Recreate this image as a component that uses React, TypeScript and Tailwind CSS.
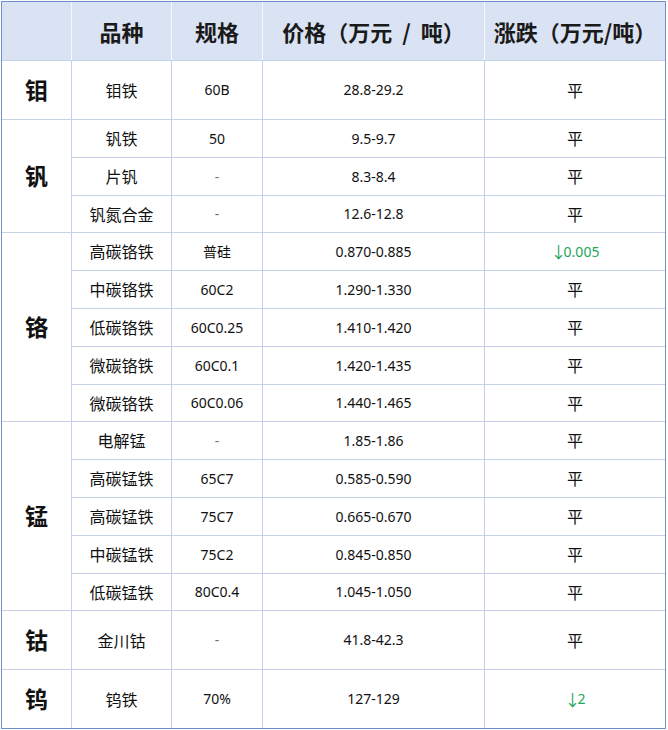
const groups = [
  { name: "钼", rows: [["钼铁", "60B", "28.8-29.2", "平"]] },
  {
    name: "钒",
    rows: [
      ["钒铁", "50", "9.5-9.7", "平"],
      ["片钒", "-", "8.3-8.4", "平"],
      ["钒氮合金", "-", "12.6-12.8", "平"],
    ],
  },
  {
    name: "铬",
    rows: [
      ["高碳铬铁", "普硅", "0.870-0.885", "↓0.005"],
      ["中碳铬铁", "60C2", "1.290-1.330", "平"],
      ["低碳铬铁", "60C0.25", "1.410-1.420", "平"],
      ["微碳铬铁", "60C0.1", "1.420-1.435", "平"],
      ["微碳铬铁", "60C0.06", "1.440-1.465", "平"],
    ],
  },
  {
    name: "锰",
    rows: [
      ["电解锰", "-", "1.85-1.86", "平"],
      ["高碳锰铁", "65C7", "0.585-0.590", "平"],
      ["高碳锰铁", "75C7", "0.665-0.670", "平"],
      ["中碳锰铁", "75C2", "0.845-0.850", "平"],
      ["低碳锰铁", "80C0.4", "1.045-1.050", "平"],
    ],
  },
  { name: "钴", rows: [["金川钴", "-", "41.8-42.3", "平"]] },
  { name: "钨", rows: [["钨铁", "70%", "127-129", "↓2"]] },
];

const spans: Record<number, string> = {
  1: "row-span-1",
  3: "row-span-3",
  5: "row-span-5",
};

const cjk = "font-['Noto_Sans_CJK_SC',sans-serif]";
const num = "font-['Noto_Sans','Noto_Sans_CJK_SC',sans-serif]";

function Cell({ children, className = "" }: { children: React.ReactNode; className?: string }) {
  return (
    <div className={`bg-white flex items-center justify-center pb-px text-[#111] ${className}`}>
      {children}
    </div>
  );
}

function Change({ value }: { value: string }) {
  if (value === "平") {
    return <Cell className={`${cjk} text-[16px]`}>平</Cell>;
  }
  // falling value: arrow + amount, in green
  return (
    <Cell className={`${num} text-[14px] !text-[#21a65a]`}>
      <span className={`${cjk} text-[16px] tracking-[-3px]`}>↓</span>
      <span>{value.slice(1)}</span>
    </Cell>
  );
}

export default function App() {
  return (
    <div className="w-[668px] h-[730px] bg-white pt-px pl-px">
      <div className="w-[665px] border border-[#6f8fc8] bg-[#c6d1e8] grid grid-cols-[69px_99px_90px_221px_180px] grid-rows-[58px_58px_37px_37px_36px_37px_37px_37px_37px_36px_37px_37px_37px_37px_36px_58px_58px] gap-px">
        <div className={`col-span-5 grid grid-cols-[69px_99px_90px_221px_180px] gap-px bg-[#f4f7fc] ${cjk} font-bold text-[22px] text-[#1a1a1a]`}>
          <div className="bg-[#dae3f3]" />
          <div className="bg-[#dae3f3] flex items-center justify-center">品种</div>
          <div className="bg-[#dae3f3] flex items-center justify-center">规格</div>
          <div className="bg-[#dae3f3] flex items-center justify-center whitespace-pre">价格（万元  /  吨）</div>
          <div className="bg-[#dae3f3] flex items-center justify-center">涨跌（万元/吨）</div>
        </div>
        {groups.map((g) => (
          <>
            <Cell key={g.name} className={`${spans[g.rows.length]} ${cjk} font-bold text-[23px]`}>
              {g.name}
            </Cell>
            {g.rows.map((r, i) => (
              <>
                <Cell key={g.name + i + "a"} className={`${cjk} text-[16px]`}>{r[0]}</Cell>
                <Cell key={g.name + i + "b"} className={`${num} text-[14px] ${r[1] === "-" ? "text-gray-500" : ""}`}>
                  {r[1]}
                </Cell>
                <Cell key={g.name + i + "c"} className={`${num} text-[14px]`}>{r[2]}</Cell>
                <Change key={g.name + i + "d"} value={r[3]} />
              </>
            ))}
          </>
        ))}
      </div>
    </div>
  );
}
